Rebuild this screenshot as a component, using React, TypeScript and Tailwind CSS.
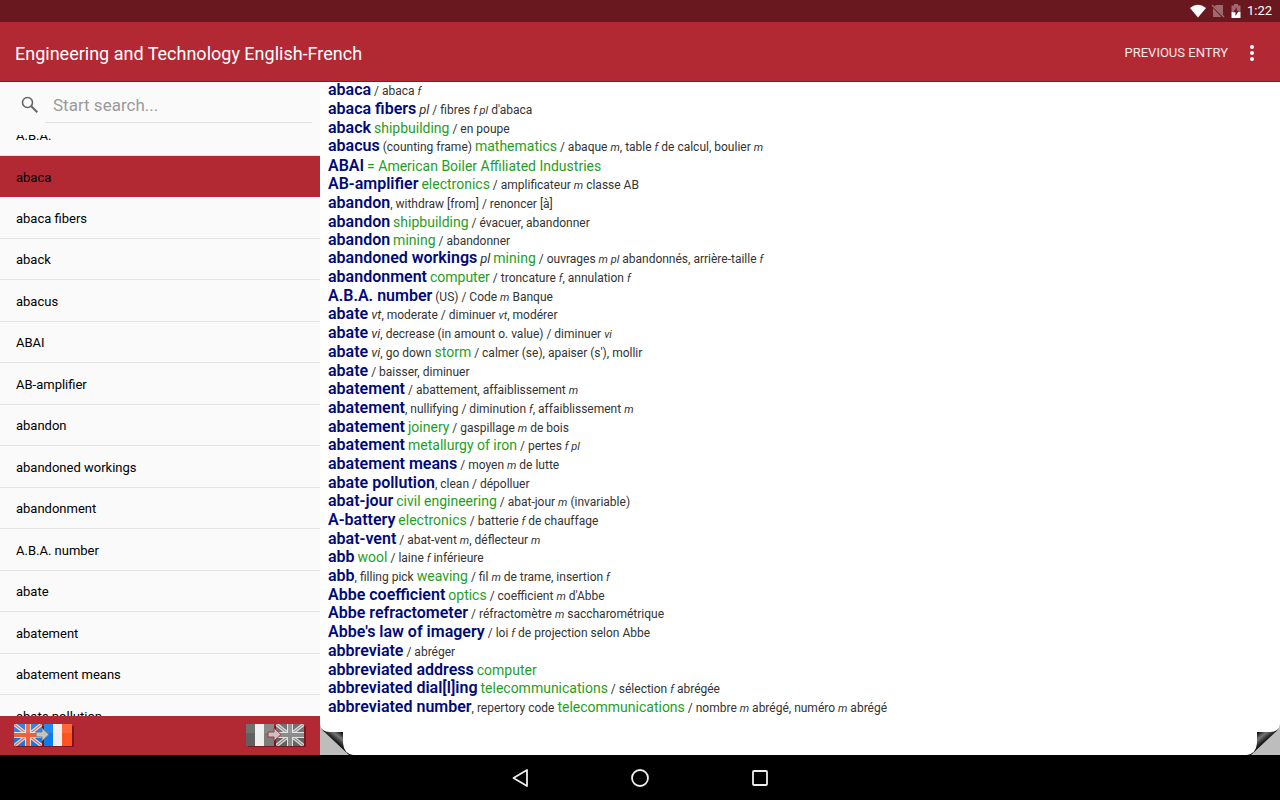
import { useState } from 'react';

// {g:..} subject field, {n:..} grammar note of the headword, {i:..} grammar note of the translation
const entries: [string, string][] = [
  ['abaca', ' / abaca {i:f}'],
  ['abaca fibers', " {n:pl} / fibres {i:f pl} d'abaca"],
  ['aback', ' {g:shipbuilding} / en poupe'],
  ['abacus', ' (counting frame) {g:mathematics} / abaque {i:m}, table {i:f} de calcul, boulier {i:m}'],
  ['ABAI', ' {g:= American Boiler Affiliated Industries}'],
  ['AB-amplifier', ' {g:electronics} / amplificateur {i:m} classe AB'],
  ['abandon', ', withdraw [from] / renoncer [à]'],
  ['abandon', ' {g:shipbuilding} / évacuer, abandonner'],
  ['abandon', ' {g:mining} / abandonner'],
  ['abandoned workings', ' {n:pl} {g:mining} / ouvrages {i:m pl} abandonnés, arrière-taille {i:f}'],
  ['abandonment', ' {g:computer} / troncature {i:f}, annulation {i:f}'],
  ['A.B.A. number', ' (US) / Code {i:m} Banque'],
  ['abate', ' {n:vt}, moderate / diminuer {i:vt}, modérer'],
  ['abate', ' {n:vi}, decrease (in amount o. value) / diminuer {i:vi}'],
  ['abate', " {n:vi}, go down {g:storm} / calmer (se), apaiser (s'), mollir"],
  ['abate', ' / baisser, diminuer'],
  ['abatement', ' / abattement, affaiblissement {i:m}'],
  ['abatement', ', nullifying / diminution {i:f}, affaiblissement {i:m}'],
  ['abatement', ' {g:joinery} / gaspillage {i:m} de bois'],
  ['abatement', ' {g:metallurgy of iron} / pertes {i:f pl}'],
  ['abatement means', ' / moyen {i:m} de lutte'],
  ['abate pollution', ', clean / dépolluer'],
  ['abat-jour', ' {g:civil engineering} / abat-jour {i:m} (invariable)'],
  ['A-battery', ' {g:electronics} / batterie {i:f} de chauffage'],
  ['abat-vent', ' / abat-vent {i:m}, déflecteur {i:m}'],
  ['abb', ' {g:wool} / laine {i:f} inférieure'],
  ['abb', ', filling pick {g:weaving} / fil {i:m} de trame, insertion {i:f}'],
  ['Abbe coefficient', " {g:optics} / coefficient {i:m} d'Abbe"],
  ['Abbe refractometer', ' / réfractomètre {i:m} saccharométrique'],
  ["Abbe's law of imagery", ' / loi {i:f} de projection selon Abbe'],
  ['abbreviate', ' / abréger'],
  ['abbreviated address', ' {g:computer}'],
  ['abbreviated dial[l]ing', ' {g:telecommunications} / sélection {i:f} abrégée'],
  ['abbreviated number', ', repertory code {g:telecommunications} / nombre {i:m} abrégé, numéro {i:m} abrégé'],
];

const words = [
  'A.B.A.',
  'abaca',
  'abaca fibers',
  'aback',
  'abacus',
  'ABAI',
  'AB-amplifier',
  'abandon',
  'abandoned workings',
  'abandonment',
  'A.B.A. number',
  'abate',
  'abatement',
  'abatement means',
  'abate pollution',
];

const markStyles: Record<string, string> = {
  g: 'text-[14px] text-[#1f9e1f]',
  n: 'text-[13px] italic',
  i: 'text-[11px] italic',
};

function Entry({ head, body }: { head: string; body: string }) {
  return (
    <p className="flex items-center whitespace-pre">
      <span>
        <b className="text-[16px] font-semibold text-[#000a78]">{head}</b>
        {body.split(/(\{[^}]+\})/).map((part, i) =>
          part.startsWith('{') ? (
            <span key={i} className={markStyles[part[1]]}>
              {part.slice(3, -1)}
            </span>
          ) : (
            part
          ),
        )}
      </span>
    </p>
  );
}

function StatusBar() {
  return (
    <div className="flex h-[22px] shrink-0 items-center justify-end bg-[#6a181f] pr-2 text-white">
      <svg width="18" height="14" viewBox="0 0 18 14" className="mr-1">
        <path d="M9 13.5 1 4Q9-2.5 17 4Z" fill="#fff" />
      </svg>
      <svg width="14" height="14" viewBox="0 0 14 14" className="mr-[6px]">
        <path d="M5 1h7v10L3.500 2.500ZM2 4l8.500 9H2Z" fill="#fff" opacity=".35" />
        <path d="m1 1 12 12" stroke="#fff" strokeWidth="1.200" opacity=".4" />
      </svg>
      <svg width="10" height="14" viewBox="0 0 10 14" className="mr-[6px]">
        <path d="M3 0h4v1.500h2.500V8h-9V1.500H3Z" fill="#fff" opacity=".35" />
        <path d="M.5 8h9v6h-9Z" fill="#fff" />
        <path d="M5.800 3 2.300 8.200h2.200V12l3.300-5.200H5.800Z" fill="#6a181f" />
      </svg>
      <span className="text-[13px]">1:22</span>
    </div>
  );
}

function UnionJack({ x, field, cross }: { x: number; field: string; cross: string }) {
  return (
    <svg x={x} y="1" width="28" height="22" viewBox="0 0 28 22">
      <rect width="28" height="22" fill={field} />
      <path d="M0 0 28 22M28 0 0 22" stroke="#dcdcdc" strokeWidth="3.500" />
      <path d="M0 0 28 22M28 0 0 22" stroke={cross} strokeWidth="1.200" />
      <path d="M14 0v22M0 11h28" stroke="#e2e2e2" strokeWidth="6" />
      <path d="M14 0v22M0 11h28" stroke={cross} strokeWidth="4" />
      <rect width="28" height="9" fill="#fff" opacity=".1" />
    </svg>
  );
}

function Tricolour({ x, left, right }: { x: number; left: string; right: string }) {
  return (
    <svg x={x} y="1" width="28" height="22" viewBox="0 0 28 22">
      <rect width="10" height="22" fill={left} />
      <rect x="9" width="10" height="22" fill="#eee" />
      <rect x="18" width="10" height="22" fill={right} />
      <rect width="28" height="9" fill="#fff" opacity=".1" />
    </svg>
  );
}

function Arrow({ x, edge }: { x: number; edge: string }) {
  return (
    <path
      transform={`translate(${x} 4)`}
      d="M0 5h6V1l7 6.500L6 14v-4H0Z"
      fill="#c4c4c4"
      stroke={edge}
      strokeWidth="1"
    />
  );
}

function PageCurl({ className }: { className: string }) {
  return (
    <svg width="34" height="40" viewBox="0 0 34 40" className={className}>
      <defs>
        <linearGradient id="curl" gradientUnits="userSpaceOnUse" x1="12" y1="28" x2="21" y2="17">
          <stop offset="0" stopColor="#000" />
          <stop offset=".3" stopColor="#222" />
          <stop offset=".65" stopColor="#777" />
          <stop offset="1" stopColor="#111" />
        </linearGradient>
      </defs>
      <path d="M0 9v31h30L6 17Q1 15 0 9Z" fill="#bdbdbd" />
      <path d="M0 9Q1 17 10 17H23V28Q24 39 33 40H29L5 17.500Q1 15 0 9Z" fill="url(#curl)" />
    </svg>
  );
}

export default function App() {
  const [selected, setSelected] = useState('abaca');

  return (
    <div className="flex h-screen flex-col overflow-hidden bg-black font-[Roboto,sans-serif]">
      <StatusBar />

      <header className="flex h-[60px] shrink-0 items-center border-b border-[#a01018] bg-[#b22833] pt-[3px] pr-6 pl-[15px] text-white">
        <h1 className="flex-1 text-[18px]">Engineering and Technology English-French</h1>
        <button type="button" className="text-[13px] text-white/90">
          PREVIOUS ENTRY
        </button>
        <button type="button" aria-label="More options" className="ml-5">
          <svg width="8" height="18" viewBox="0 0 8 18" fill="#fff">
            <circle cx="4" cy="3" r="2" />
            <circle cx="4" cy="9" r="2" />
            <circle cx="4" cy="15" r="2" />
          </svg>
        </button>
      </header>

      <div className="flex min-h-0 flex-1">
        <aside className="flex w-1/4 flex-col bg-[#fafafa]">
          <label className="flex h-[53px] shrink-0 items-start pr-2 pl-5">
            <svg width="20" height="20" viewBox="0 0 20 20" fill="none" stroke="#666" className="mt-[13px] mr-[5px]">
              <circle cx="7.500" cy="7.500" r="5" strokeWidth="1.600" />
              <path d="m11.300 11.300 6 6" strokeWidth="2" />
            </svg>
            <input
              type="search"
              aria-label="Search"
              placeholder="Start search..."
              className="h-[41px] min-w-0 flex-1 border-b border-[#e2e2e2] pt-[6px] pl-2 text-[17px] outline-none placeholder:text-[#9b9b9b]"
            />
          </label>

          <div className="min-h-0 flex-1 overflow-hidden">
            <ul className="-mt-[21px] grid h-[calc(100%+42px)] auto-rows-fr text-[13px]">
              {words.map((word) => (
                <li key={word} className={word === selected ? 'bg-[#b22833]' : 'border-b border-[#e4e4e4]'}>
                  <button
                    type="button"
                    onClick={() => setSelected(word)}
                    className="flex h-full w-full items-center px-4 pt-[2px]"
                  >
                    {word}
                  </button>
                </li>
              ))}
            </ul>
          </div>

          <div className="flex h-[39px] shrink-0 items-start justify-between bg-[#b22833] px-[14px] pt-[7px]">
            <button type="button" aria-label="English to French">
              <svg width="60" height="25" viewBox="0 0 60 25">
                <rect x="2" y="3" width="58" height="21" fill="#6d1219" opacity=".8" />
                <UnionJack x={0} field="#1c76e0" cross="#f0603c" />
                <Tricolour x={30} left="#0a7cf0" right="#ff5420" />
                <Arrow x={22} edge="#777" />
              </svg>
            </button>
            <button type="button" aria-label="French to English">
              <svg width="60" height="25" viewBox="0 0 60 25">
                <rect x="2" y="3" width="58" height="21" fill="#6d1219" opacity=".8" />
                <Tricolour x={0} left="#606060" right="#7c7c7c" />
                <UnionJack x={30} field="#636363" cross="#8c8c8c" />
                <Arrow x={22} edge="#a8323c" />
              </svg>
            </button>
          </div>
        </aside>

        <main className="relative grid flex-1 auto-rows-fr bg-white pb-[38px] pl-2 text-[12px] leading-[18px] text-[#333]">
          {entries.map(([head, body], i) => (
            <Entry key={i} head={head} body={body} />
          ))}
          <PageCurl className="absolute bottom-0 left-0" />
          <PageCurl className="absolute right-0 bottom-0 -scale-x-100" />
        </main>
      </div>

      <nav className="flex h-[45px] shrink-0 items-center justify-center gap-24">
        <button type="button" aria-label="Back">
          <svg width="24" height="24" viewBox="0 0 24 24" fill="none" stroke="#eee" strokeWidth="1.800">
            <path d="M19 4v16L5.500 12Z" strokeLinejoin="round" />
          </svg>
        </button>
        <button type="button" aria-label="Home">
          <svg width="24" height="24" viewBox="0 0 24 24" fill="none" stroke="#eee" strokeWidth="1.800">
            <circle cx="12" cy="12" r="8" />
          </svg>
        </button>
        <button type="button" aria-label="Recent apps">
          <svg width="24" height="24" viewBox="0 0 24 24" fill="none" stroke="#eee" strokeWidth="1.800">
            <rect x="5" y="5" width="14" height="14" rx="1" />
          </svg>
        </button>
      </nav>
    </div>
  );
}
